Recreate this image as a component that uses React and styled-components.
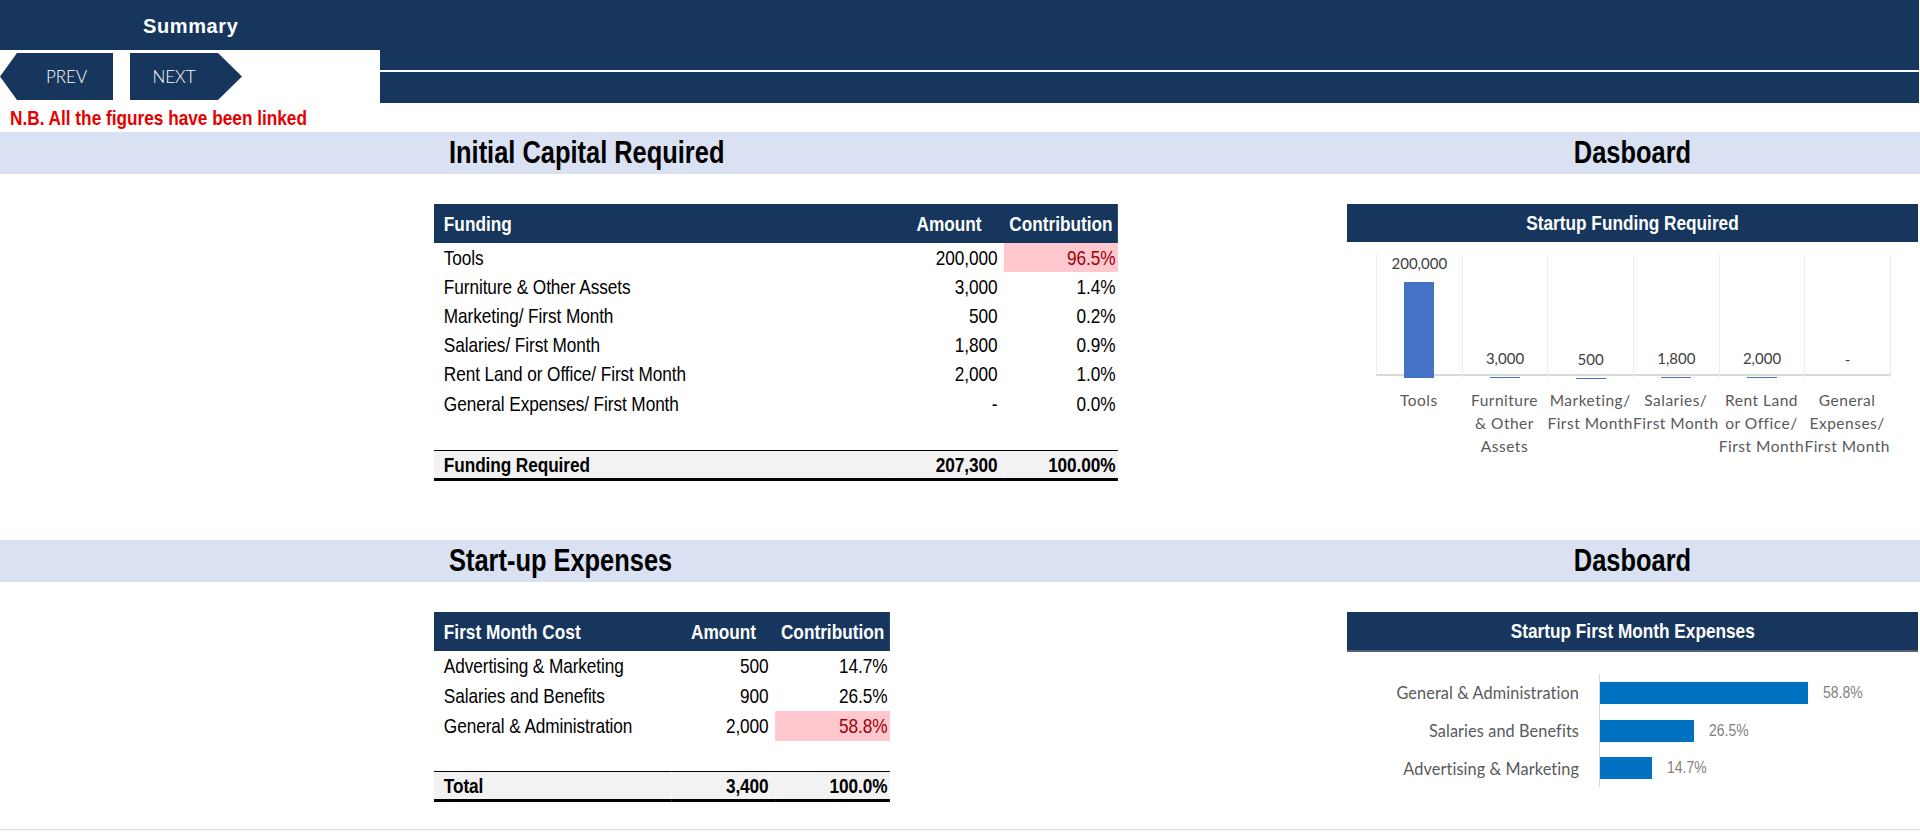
import React from 'react';
import styled, { createGlobalStyle } from 'styled-components';

const NAVY = '#17365d';
const BAND = '#d9e1f2';
// no narrow face is installed, so Arial-metric text is squeezed to Arial Narrow's 82%
const SANS = `"Liberation Sans", Arial, sans-serif`;
const CHART = `Lato, "Open Sans", sans-serif`;
const SQUEEZE = 0.82;
const HEAD_H = 39;

const GlobalStyle = createGlobalStyle`
  html, body { margin: 0; padding: 0; background: #fff; }
  body { font-family: ${SANS}; }
`;

const funding = [
  { name: 'Tools', amount: '200,000', share: '96.5%', hot: true },
  { name: 'Furniture & Other Assets', amount: '3,000', share: '1.4%' },
  { name: 'Marketing/ First Month', amount: '500', share: '0.2%' },
  { name: 'Salaries/ First Month', amount: '1,800', share: '0.9%' },
  { name: 'Rent Land or Office/ First Month', amount: '2,000', share: '1.0%' },
  { name: 'General Expenses/ First Month', amount: '-', share: '0.0%' },
];

const fundingChart = [
  { value: 200000, label: '200,000', lines: ['Tools'] },
  { value: 3000, label: '3,000', lines: ['Furniture', '& Other', 'Assets'] },
  { value: 500, label: '500', lines: ['Marketing/', 'First Month'] },
  { value: 1800, label: '1,800', lines: ['Salaries/', 'First Month'] },
  { value: 2000, label: '2,000', lines: ['Rent Land', 'or Office/', 'First Month'] },
  { value: 0, label: '-', lines: ['General', 'Expenses/', 'First Month'] },
];

const costs = [
  { name: 'Advertising & Marketing', amount: '500', share: '14.7%' },
  { name: 'Salaries and Benefits', amount: '900', share: '26.5%' },
  { name: 'General & Administration', amount: '2,000', share: '58.8%', hot: true },
];

const costChart = [
  { name: 'General & Administration', pct: 58.8 },
  { name: 'Salaries and Benefits', pct: 26.5 },
  { name: 'Advertising & Marketing', pct: 14.7 },
];

const Page = styled.div`
  width: 1920px;
  height: 833px;
  overflow: hidden;
  background: #fff;
`;

const Squeeze = styled.span`
  display: inline-block;
  white-space: nowrap;
  transform: scaleX(${SQUEEZE});
  transform-origin: ${p => p.$origin || 'left'} center;
`;

/* ---------- top bar ---------- */
const TopBar = styled.header`
  display: flex;
  height: 103px;
`;

const TopLeft = styled.div`
  width: 380px;
  display: flex;
  flex-direction: column;
`;

const TitleStrip = styled.div`
  height: 50px;
  background: ${NAVY};
  padding-left: 143px;
  box-sizing: border-box;
  color: #fff;
  font-family: ${SANS};
  font-weight: bold;
  font-size: 20px;
  letter-spacing: 0.6px;
  line-height: 53px;
`;

const NavRow = styled.div`
  display: flex;
  gap: 17px;
  padding-top: 3px;
`;

const NavButton = styled.div`
  height: 47px;
  width: ${p => (p.$dir === 'prev' ? 113 : 112)}px;
  background: ${NAVY};
  color: #fff;
  font-family: ${CHART};
  font-size: 17px;
  font-weight: 300;
  display: flex;
  align-items: center;
  justify-content: center;
  box-sizing: border-box;
  padding: ${p => (p.$dir === 'prev' ? '0 0 0 20px' : '0 24px 0 0')};
  clip-path: ${p =>
    p.$dir === 'prev'
      ? 'polygon(17px 0, 100% 0, 100% 100%, 17px 100%, 0 50%)'
      : 'polygon(0 0, calc(100% - 24px) 0, 100% 50%, calc(100% - 24px) 100%, 0 100%)'};
`;

const TopRight = styled.div`
  flex: 1;
  display: flex;
  flex-direction: column;
  gap: 2px;
  padding-right: 1px;
`;

const NavyStrip = styled.div`
  height: ${p => p.$h}px;
  background: ${NAVY};
`;

const Note = styled.div`
  height: 29px;
  line-height: 30px;
  padding-left: 10px;
  color: #e60000;
  font-family: ${SANS};
  font-weight: bold;
  font-size: 21px;
`;

/* ---------- sections ---------- */
const SectionBand = styled.div`
  display: grid;
  grid-template-columns: 434px 913px 571px 1fr;
  height: 42px;
  background: ${BAND};
  align-items: center;
`;

const SectionTitle = styled.h2`
  grid-column: 2;
  margin: 0;
  padding-left: 15px;
  font-family: ${SANS};
  font-weight: bold;
  font-size: 31px;
  line-height: 42px;
  color: #000;
`;

const DashTitle = styled(SectionTitle)`
  grid-column: 3;
  padding-left: 0;
  text-align: center;
`;

const SectionBody = styled.div`
  display: grid;
  grid-template-columns: 434px 913px 571px 1fr;
  align-items: start;
  padding-top: 30px;
  height: ${p => p.$h}px;
  box-sizing: border-box;
  border-bottom: ${p => (p.$last ? '1px solid #d9d9d9' : 'none')};
`;

/* ---------- tables (laid out at full Arial width, then squeezed) ---------- */
const Table = styled.table`
  grid-column: 2;
  border-collapse: collapse;
  table-layout: fixed;
  width: ${p => p.$width / SQUEEZE}px;
  transform: scaleX(${SQUEEZE});
  transform-origin: left top;
  font-family: ${SANS};
  color: #000;
  /* header fill painted once on the table so the squeezed cells show no seams */
  background: linear-gradient(${NAVY}, ${NAVY}) top left / 100% ${HEAD_H}px no-repeat;
`;

const HeadCell = styled.th`
  height: ${HEAD_H}px;
  padding: 0;
  padding-left: ${p => (p.$align === 'left' ? 12 : 0)}px;
  color: #fff;
  font-size: 21px;
  font-weight: bold;
  text-align: ${p => p.$align || 'center'};
  white-space: nowrap;
`;

const Cell = styled.td`
  height: ${p => p.$h || 29.2}px;
  padding: 0;
  padding-left: ${p => (p.$align === 'left' ? 12 : 0)}px;
  padding-right: ${p => p.$pr || 0}px;
  font-size: 21px;
  letter-spacing: -0.1px;
  text-align: ${p => p.$align || 'right'};
  white-space: nowrap;
  background: ${p => (p.$hot ? '#ffc7ce' : 'transparent')};
  color: ${p => (p.$hot ? '#9c0006' : '#000')};
`;

const TotalRow = styled.tr`
  background: #f2f2f2;
  border-top: 1px solid #000;
  border-bottom: 3px solid #000;

  td {
    height: 27px;
    font-weight: bold;
  }
`;

/* ---------- charts ---------- */
const ChartCard = styled.div`
  grid-column: 3;
  width: 571px;
`;

const ChartHead = styled.div`
  height: 38px;
  background: ${NAVY};
  color: #fff;
  font-family: ${SANS};
  font-weight: bold;
  font-size: 21px;
  text-align: center;
  line-height: 38px;
  border-bottom: ${p => (p.$line ? '2px solid #52627a' : 'none')};
`;

const Plot = styled.div`
  margin: 12px 0 0 29px;
  width: 514px;
  height: 120px;
  display: grid;
  grid-template-columns: repeat(6, 1fr);
  border-bottom: 2px solid #d9d9d9;
  border-left: 1px solid #ececec;
`;

const PlotColumn = styled.div`
  display: flex;
  flex-direction: column;
  justify-content: flex-end;
  align-items: center;
  border-right: 1px solid #ececec;
`;

const ValueLabel = styled.div`
  font-family: ${CHART};
  font-size: 15px;
  line-height: 18px;
  color: #404040;
  margin-bottom: 10px;
`;

const Bar = styled.div`
  width: 30px;
  background: #4472c4;
`;

const Categories = styled.div`
  margin: 13px 0 0 29px;
  width: 514px;
  display: grid;
  grid-template-columns: repeat(6, 1fr);
`;

const Category = styled.div`
  text-align: center;
  font-family: ${CHART};
  font-size: 15.5px;
  line-height: 23px;
  letter-spacing: 0.5px;
  color: #595959;
  white-space: nowrap;
`;

const HBarGrid = styled.div`
  margin-top: 22px;
  display: grid;
  grid-template-columns: 232px 1fr;
  grid-auto-rows: 37.7px;
  column-gap: 20px;
`;

const HLabel = styled.div`
  display: flex;
  align-items: center;
  justify-content: flex-end;
  font-family: ${CHART};
  font-size: 16.3px;
  letter-spacing: 0.1px;
  color: #595959;
  white-space: nowrap;
`;

const HBarCell = styled.div`
  display: flex;
  align-items: center;
  border-left: 1px solid #d9d9d9;
`;

const HBar = styled.div`
  height: 22px;
  background: #0070c0;
`;

const HValue = styled.span`
  margin-left: 15px;
  font-family: ${SANS};
  font-size: 17px;
  color: #7f7f7f;
`;

const FundingChart = () => (
  <ChartCard>
    <ChartHead>
      <Squeeze $origin="center">Startup Funding Required</Squeeze>
    </ChartHead>
    <Plot>
      {fundingChart.map(d => (
        <PlotColumn key={d.lines.join()}>
          <ValueLabel>{d.label}</ValueLabel>
          <Bar style={{ height: `${(d.value / 250000) * 120}px` }} />
        </PlotColumn>
      ))}
    </Plot>
    <Categories>
      {fundingChart.map(d => (
        <Category key={d.lines.join()}>
          {d.lines.map(l => (
            <div key={l}>{l}</div>
          ))}
        </Category>
      ))}
    </Categories>
  </ChartCard>
);

const CostChart = () => (
  <ChartCard>
    <ChartHead $line>
      <Squeeze $origin="center">Startup First Month Expenses</Squeeze>
    </ChartHead>
    <HBarGrid>
      {costChart.map(d => (
        <React.Fragment key={d.name}>
          <HLabel>{d.name}</HLabel>
          <HBarCell>
            <HBar style={{ width: `${d.pct * 3.54}px` }} />
            <HValue>
              <Squeeze>{d.pct.toFixed(1)}%</Squeeze>
            </HValue>
          </HBarCell>
        </React.Fragment>
      ))}
    </HBarGrid>
  </ChartCard>
);

const App = () => (
  <Page>
    <GlobalStyle />
    <TopBar>
      <TopLeft>
        <TitleStrip>Summary</TitleStrip>
        <NavRow>
          <NavButton $dir="prev">PREV</NavButton>
          <NavButton $dir="next">NEXT</NavButton>
        </NavRow>
      </TopLeft>
      <TopRight>
        <NavyStrip $h={70} />
        <NavyStrip $h={31} />
      </TopRight>
    </TopBar>

    <Note>
      <Squeeze>N.B. All the figures have been linked</Squeeze>
    </Note>

    <SectionBand>
      <SectionTitle>
        <Squeeze>Initial Capital Required</Squeeze>
      </SectionTitle>
      <DashTitle>
        <Squeeze $origin="center">Dasboard</Squeeze>
      </DashTitle>
    </SectionBand>
    <SectionBody $h={366}>
      <Table $width={684}>
        <colgroup>
          <col style={{ width: 561 }} />
          <col style={{ width: 134 }} />
          <col style={{ width: 139 }} />
        </colgroup>
        <thead>
          <tr>
            <HeadCell $align="left">Funding</HeadCell>
            <HeadCell>Amount</HeadCell>
            <HeadCell>Contribution</HeadCell>
          </tr>
        </thead>
        <tbody>
          {funding.map(r => (
            <tr key={r.name}>
              <Cell $align="left">{r.name}</Cell>
              <Cell $pr={8}>{r.amount}</Cell>
              <Cell $pr={3} $hot={r.hot}>{r.share}</Cell>
            </tr>
          ))}
          <tr>
            <Cell $h={32} colSpan={3} />
          </tr>
          <TotalRow>
            <Cell $align="left">Funding Required</Cell>
            <Cell $pr={8}>207,300</Cell>
            <Cell $pr={3}>100.00%</Cell>
          </TotalRow>
        </tbody>
      </Table>
      <FundingChart />
    </SectionBody>

    <SectionBand>
      <SectionTitle>
        <Squeeze>Start-up Expenses</Squeeze>
      </SectionTitle>
      <DashTitle>
        <Squeeze $origin="center">Dasboard</Squeeze>
      </DashTitle>
    </SectionBand>
    <SectionBody $h={248} $last>
      <Table $width={456}>
        <colgroup>
          <col style={{ width: 290 }} />
          <col style={{ width: 126 }} />
          <col style={{ width: 140 }} />
        </colgroup>
        <thead>
          <tr>
            <HeadCell $align="left">First Month Cost</HeadCell>
            <HeadCell>Amount</HeadCell>
            <HeadCell>Contribution</HeadCell>
          </tr>
        </thead>
        <tbody>
          {costs.map(r => (
            <tr key={r.name}>
              <Cell $h={30} $align="left">{r.name}</Cell>
              <Cell $h={30} $pr={8}>{r.amount}</Cell>
              <Cell $h={30} $pr={3} $hot={r.hot}>{r.share}</Cell>
            </tr>
          ))}
          <tr>
            <Cell $h={30} colSpan={3} />
          </tr>
          <TotalRow>
            <Cell $align="left">Total</Cell>
            <Cell $pr={8}>3,400</Cell>
            <Cell $pr={3}>100.0%</Cell>
          </TotalRow>
        </tbody>
      </Table>
      <CostChart />
    </SectionBody>
  </Page>
);

export default App;
